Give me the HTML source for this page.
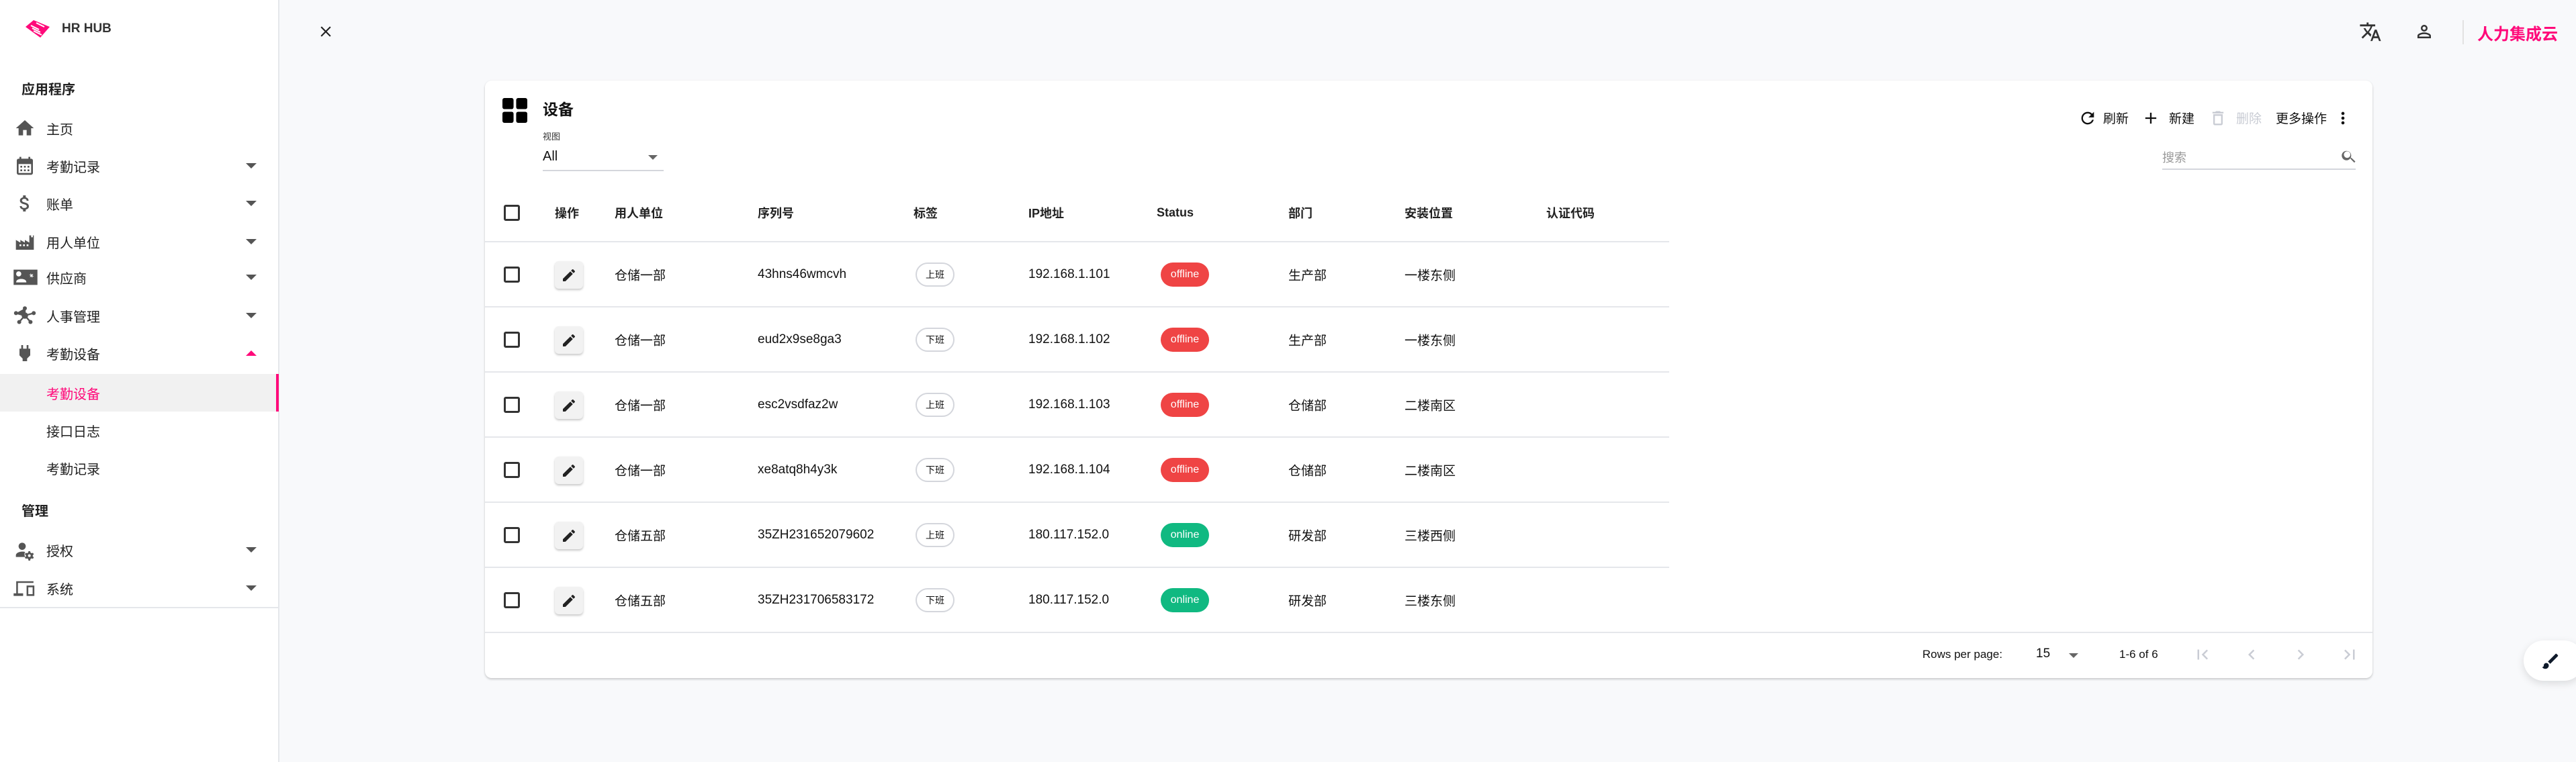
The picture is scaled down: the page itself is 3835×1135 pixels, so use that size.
<!DOCTYPE html>
<html><head><meta charset="utf-8">
<style>
*{box-sizing:border-box;margin:0;padding:0}
html,body{width:3835px;height:1135px;overflow:hidden;background:#f8f9fb;font-family:"Liberation Sans","Noto Sans CJK SC",sans-serif;color:#111}
.a{position:absolute}
#side{position:absolute;left:0;top:0;width:416px;height:1135px;background:#fff;border-right:2px solid #e5e7eb}
.mi{position:absolute;left:0;width:414px;height:56px;font-size:20px;color:#222;display:flex;align-items:center}
.mi .t{position:absolute;left:69px}
.mi svg.ic{position:absolute;left:21px;width:32px;height:32px;fill:#555}
.mi .ch{position:absolute;left:366px;width:0;height:0;border-left:8px solid transparent;border-right:8px solid transparent;border-top:8px solid #555}
.sec{position:absolute;left:32px;font-size:20px;font-weight:bold;color:#222}
#card{position:absolute;left:722px;top:120px;width:2810px;height:890px;background:#fff;border-radius:10px;box-shadow:0 2px 3px rgba(0,0,0,.18),0 0 2px rgba(0,0,0,.06)}
.row{position:absolute;left:0;width:1763px;height:97px;border-top:2px solid #e5e7eb;font-size:19px}
.c{position:absolute;top:50%;transform:translateY(-50%);white-space:nowrap}
.cb{position:absolute;left:28px;top:50%;margin-top:-12px;width:24px;height:24px;border:3px solid #333;border-radius:3px}
.eb{position:absolute;left:104px;top:50%;margin-top:-20px;width:42px;height:41px;background:#f2f2f2;border-radius:6px;box-shadow:0 2px 3px rgba(0,0,0,.22)}
.tag{position:absolute;left:641px;top:50%;margin-top:-18px;width:58px;height:36px;border:2px solid #d4d6dc;border-radius:18px;font-size:14px;display:flex;align-items:center;justify-content:center}
.st{position:absolute;left:1006px;top:50%;margin-top:-18px;width:72px;height:36px;border-radius:18px;color:#fff;font-size:16px;display:flex;align-items:center;justify-content:center}
.off{background:#ef4444}.on{background:#10b981}
.h{font-size:18px;font-weight:bold;color:#222}
</style></head><body>
<div id="side">
  <svg class="a" style="left:36px;top:28px" width="40" height="30" viewBox="0 0 40 30"><path d="M2 12 L14 2 L38 12 L24 28 Z" fill="#ff0a7a"/><path d="M10 10 L22 16 M12 14 L24 20 M14 18 L26 24 M18 6 L30 12" stroke="#fff" stroke-width="2" fill="none"/></svg>
  <div class="a" style="left:92px;top:32px;font-size:19px;font-weight:bold;color:#333">HR HUB</div>
  <div class="sec" style="top:117px">应用程序</div>
  <div class="mi" style="top:163px"><svg class="ic" viewBox="0 0 24 24"><path d="M10 20v-6h4v6h5v-8h3L12 3 2 12h3v8z"/></svg><span class="t">主页</span></div>
  <div class="mi" style="top:219px"><svg class="ic" viewBox="0 0 24 24"><path d="M19 4h-1V2h-2v2H8V2H6v2H5a2 2 0 0 0-2 2v14a2 2 0 0 0 2 2h14a2 2 0 0 0 2-2V6a2 2 0 0 0-2-2zm0 16H5V10h14zM7 12h2v2H7zm4 0h2v2h-2zm4 0h2v2h-2zm-8 4h2v2H7zm4 0h2v2h-2zm4 0h2v2h-2z"/></svg><span class="t">考勤记录</span><span class="ch"></span></div>
  <div class="mi" style="top:275px"><svg class="ic" viewBox="0 0 24 24"><path d="M11.8 10.9c-2.27-.59-3-1.2-3-2.15 0-1.09 1.01-1.850 2.7-1.85 1.78 0 2.440.85 2.5 2.1h2.21c-.07-1.72-1.12-3.3-3.21-3.81V3h-3v2.160c-1.94.42-3.5 1.68-3.5 3.61 0 2.31 1.91 3.46 4.7 4.13 2.5.6 3 1.48 3 2.41 0 .69-.49 1.79-2.7 1.79-2.06 0-2.87-.92-2.98-2.1h-2.2c.12 2.19 1.76 3.42 3.68 3.83V21h3v-2.15c1.95-.37 3.5-1.5 3.5-3.55 0-2.84-2.43-3.81-4.7-4.4z"/></svg><span class="t">账单</span><span class="ch"></span></div>
  <div class="mi" style="top:332px"><svg class="ic" viewBox="0 0 24 24"><path d="M2 21V10l5 3V10l5 3V10l5 3V5h2v2h2V5h1v16zm4-4h2v-2H6zm4 0h2v-2h-2zm4 0h2v-2h-2z"/></svg><span class="t">用人单位</span><span class="ch"></span></div>
  <div class="mi" style="top:385px"><svg class="ic" style="width:38px;left:19px" viewBox="0 0 30 24"><path d="M1 3h28v18H1zm9 5a3 3 0 1 0 0 .01zM4 18h12c0-3-3-4-6-4s-6 1-6 4zm17-11l1 2 2-1-1 2 2 1-2 0 0 2-1-2-2 1 1-2-2-1h2z" fill-rule="evenodd"/></svg><span class="t">供应商</span><span class="ch"></span></div>
  <div class="mi" style="top:442px"><svg class="ic" style="width:36px;left:19px" viewBox="0 0 30 24"><circle cx="15" cy="12" r="4"/><circle cx="15" cy="3" r="2.5"/><circle cx="4" cy="9" r="2.5"/><circle cx="26" cy="9" r="2.5"/><circle cx="8" cy="20" r="2.5"/><circle cx="22" cy="20" r="2.5"/><path d="M15 3L15 12L4 9M15 12L26 9M15 12L8 20M15 12L22 20" stroke="#555" stroke-width="2"/></svg><span class="t">人事管理</span><span class="ch"></span></div>
  <div class="mi" style="top:498px"><svg class="ic" viewBox="0 0 24 24"><path d="M16 7V3h-2v4h-4V3H8v4H6v7.5L9.5 18v3h5v-3l3.5-3.5V7z"/></svg><span class="t">考勤设备</span><span class="ch" style="border-top:none;border-bottom:8px solid #ff0a7a"></span></div>
  <div class="mi" style="top:557px;background:#f1f1f1"><span class="t" style="color:#ff0a7a">考勤设备</span><span class="a" style="left:411px;top:0;width:4px;height:56px;background:#ff0a7a"></span></div>
  <div class="mi" style="top:613px"><span class="t">接口日志</span></div>
  <div class="mi" style="top:669px"><span class="t">考勤记录</span></div>
  <div class="sec" style="top:745px">管理</div>
  <div class="mi" style="top:791px"><svg class="ic" viewBox="0 0 24 24"><circle cx="9" cy="8" r="4"/><path d="M9 14c-4 0-7 2-7 4v2h10.5a6 6 0 0 1-.3-5.7C10.5 14 9.7 14 9 14zm11.8 4l1.2-1-1-1.7-1.5.5a3 3 0 0 0-1.3-.8L18 13.5h-2l-.2 1.5a3 3 0 0 0-1.3.8L13 15.3l-1 1.7 1.2 1a3 3 0 0 0 0 1.4L12 20.3l1 1.7 1.5-.5c.4.4.8.6 1.3.8l.2 1.7h2l.2-1.7c.5-.2.9-.4 1.3-.8l1.5.5 1-1.7-1.2-1a3 3 0 0 0 0-1.3zM17 20a1.5 1.5 0 1 1 0-3 1.5 1.5 0 0 1 0 3z"/></svg><span class="t">授权</span><span class="ch"></span></div>
  <div class="mi" style="top:848px"><svg class="ic" style="width:36px;left:19px" viewBox="0 0 28 24"><path d="M4 4h20v2H6v12h6v3H1v-3h3zm12 5h9v12h-9zm2 2v8h5v-8z"/></svg><span class="t">系统</span><span class="ch"></span></div>
  <div class="a" style="left:0;top:904px;width:414px;height:2px;background:#e5e7eb"></div>
</div>

<svg class="a" style="left:472px;top:34px" width="26" height="26" viewBox="0 0 24 24"><path d="M19 6.4L17.6 5 12 10.6 6.4 5 5 6.4 10.6 12 5 17.6 6.4 19 12 13.4 17.6 19 19 17.6 13.4 12z" fill="#222"/></svg>
<svg class="a" style="left:3512px;top:30px" width="34" height="34" viewBox="0 0 24 24"><path d="M12.9 15.1l-2.5-2.5v0A17 17 0 0 0 14 6.5h3V4.5h-7V2.5H8v2H1v2h11.2A15.8 15.8 0 0 1 9 11.9 15.6 15.6 0 0 1 6.7 8.5h-2a17.6 17.6 0 0 0 3 4.5L2.6 18 4 19.4l5-5 3.1 3.1zM18.5 10h-2L12 22h2l1.1-3h4.8l1.1 3h2zm-2.6 7l1.6-4.3 1.6 4.3z" fill="#333"/></svg>
<svg class="a" style="left:3594px;top:32px" width="30" height="30" viewBox="0 0 24 24"><path d="M12 6a2 2 0 1 1 0 4 2 2 0 0 1 0-4m0 9c2.7 0 5.8 1.3 6 2v1H6v-1c.2-.7 3.3-2 6-2m0-11a4 4 0 1 0 0 8 4 4 0 0 0 0-8zm0 9c-2.7 0-8 1.3-8 4v3h16v-3c0-2.7-5.3-4-8-4z" fill="#333"/></svg>
<div class="a" style="left:3666px;top:30px;width:2px;height:36px;background:#e2e2e2"></div>
<div class="a" style="left:3688px;top:31px;font-size:24px;font-weight:bold;color:#ff0a7a">人力集成云</div>

<div id="card">
  <svg class="a" style="left:26px;top:26px" width="37" height="37" viewBox="0 0 38 38"><rect x="0" y="0" width="17" height="17" rx="3"/><rect x="21" y="0" width="17" height="17" rx="3"/><rect x="0" y="21" width="17" height="17" rx="3"/><rect x="21" y="21" width="17" height="17" rx="3"/></svg>
  <div class="a" style="left:86px;top:24px;font-size:23px;font-weight:bold;color:#111">设备</div>
  <div class="a" style="left:86px;top:73px;font-size:13px;color:#333">视图</div>
  <div class="a" style="left:86px;top:102px;font-size:20px;color:#111">All</div>
  <div class="a" style="left:243px;top:111px;border-left:7px solid transparent;border-right:7px solid transparent;border-top:7px solid #666"></div>
  <div class="a" style="left:86px;top:133px;width:180px;height:2px;background:#d4d6dc"></div>

  <svg class="a" style="left:2372px;top:42px" width="28" height="28" viewBox="0 0 24 24"><path d="M17.65 6.35A7.96 7.96 0 0 0 12 4a8 8 0 1 0 7.73 10h-2.08A6 6 0 1 1 12 6c1.66 0 3.14.69 4.22 1.78L13 11h7V4z" fill="#111"/></svg>
  <div class="a" style="left:2409px;top:42px;font-size:19px">刷新</div>
  <svg class="a" style="left:2466px;top:42px" width="28" height="28" viewBox="0 0 24 24"><path d="M19 13h-6v6h-2v-6H5v-2h6V5h2v6h6z" fill="#111"/></svg>
  <div class="a" style="left:2507px;top:42px;font-size:19px">新建</div>
  <svg class="a" style="left:2566px;top:42px" width="28" height="28" viewBox="0 0 24 24"><path d="M6 19a2 2 0 0 0 2 2h8a2 2 0 0 0 2-2V7H6zM8 9h8v10H8zm7.5-5l-1-1h-5l-1 1H5v2h14V4z" fill="#c9ccd4"/></svg>
  <div class="a" style="left:2607px;top:42px;font-size:19px;color:#c9ccd4">删除</div>
  <div class="a" style="left:2666px;top:42px;font-size:19px">更多操作</div>
  <svg class="a" style="left:2752px;top:42px" width="28" height="28" viewBox="0 0 24 24"><path d="M12 8a2 2 0 1 0 0-4 2 2 0 0 0 0 4zm0 2a2 2 0 1 0 0 4 2 2 0 0 0 0-4zm0 6a2 2 0 1 0 0 4 2 2 0 0 0 0-4z" fill="#111"/></svg>
  <div class="a" style="left:2497px;top:101px;font-size:18px;color:#999">搜索</div>
  <svg class="a" style="left:2762px;top:100px" width="26" height="26" viewBox="0 0 24 24"><path d="M15.5 14h-.8l-.3-.3A6.5 6.5 0 1 0 14 14.4l.3.3v.8l5 5 1.5-1.5zm-6 0a4.5 4.5 0 1 1 0-9 4.5 4.5 0 0 1 0 9z" fill="#666"/></svg>
  <div class="a" style="left:2497px;top:131px;width:288px;height:2px;background:#d4d6dc"></div>

  <div class="row" style="top:154px;height:86px;border-top:none">
    <div class="cb"></div>
    <div class="c h" style="left:104px">操作</div>
    <div class="c h" style="left:193px">用人单位</div>
    <div class="c h" style="left:406px">序列号</div>
    <div class="c h" style="left:638px">标签</div>
    <div class="c h" style="left:809px">IP地址</div>
    <div class="c h" style="left:1000px">Status</div>
    <div class="c h" style="left:1196px">部门</div>
    <div class="c h" style="left:1369px">安装位置</div>
    <div class="c h" style="left:1580px">认证代码</div>
  </div>

  <div class="row" style="top:239px"><div class="cb"></div><div class="eb"><svg class="a" style="left:9px;top:9px" width="24" height="24" viewBox="0 0 24 24"><path d="M3 17.25V21h3.75L17.81 9.94l-3.75-3.75zM20.71 7.04a1 1 0 0 0 0-1.41l-2.34-2.34a1 1 0 0 0-1.410 0l-1.83 1.83 3.75 3.75z" fill="#222"/></svg></div><div class="c" style="left:193px">仓储一部</div><div class="c" style="left:406px">43hns46wmcvh</div><div class="tag">上班</div><div class="c" style="left:809px">192.168.1.101</div><div class="st off">offline</div><div class="c" style="left:1196px">生产部</div><div class="c" style="left:1369px">一楼东侧</div></div>
  <div class="row" style="top:336px"><div class="cb"></div><div class="eb"><svg class="a" style="left:9px;top:9px" width="24" height="24" viewBox="0 0 24 24"><path d="M3 17.25V21h3.75L17.81 9.94l-3.75-3.75zM20.71 7.04a1 1 0 0 0 0-1.41l-2.34-2.34a1 1 0 0 0-1.41 0l-1.83 1.83 3.75 3.75z" fill="#222"/></svg></div><div class="c" style="left:193px">仓储一部</div><div class="c" style="left:406px">eud2x9se8ga3</div><div class="tag">下班</div><div class="c" style="left:809px">192.168.1.102</div><div class="st off">offline</div><div class="c" style="left:1196px">生产部</div><div class="c" style="left:1369px">一楼东侧</div></div>
  <div class="row" style="top:433px"><div class="cb"></div><div class="eb"><svg class="a" style="left:9px;top:9px" width="24" height="24" viewBox="0 0 24 24"><path d="M3 17.25V21h3.75L17.81 9.94l-3.75-3.75zM20.71 7.04a1 1 0 0 0 0-1.41l-2.34-2.34a1 1 0 0 0-1.41 0l-1.83 1.83 3.75 3.75z" fill="#222"/></svg></div><div class="c" style="left:193px">仓储一部</div><div class="c" style="left:406px">esc2vsdfaz2w</div><div class="tag">上班</div><div class="c" style="left:809px">192.168.1.103</div><div class="st off">offline</div><div class="c" style="left:1196px">仓储部</div><div class="c" style="left:1369px">二楼南区</div></div>
  <div class="row" style="top:530px"><div class="cb"></div><div class="eb"><svg class="a" style="left:9px;top:9px" width="24" height="24" viewBox="0 0 24 24"><path d="M3 17.25V21h3.75L17.81 9.94l-3.75-3.75zM20.71 7.04a1 1 0 0 0 0-1.41l-2.34-2.34a1 1 0 0 0-1.41 0l-1.83 1.83 3.75 3.75z" fill="#222"/></svg></div><div class="c" style="left:193px">仓储一部</div><div class="c" style="left:406px">xe8atq8h4y3k</div><div class="tag">下班</div><div class="c" style="left:809px">192.168.1.104</div><div class="st off">offline</div><div class="c" style="left:1196px">仓储部</div><div class="c" style="left:1369px">二楼南区</div></div>
  <div class="row" style="top:627px"><div class="cb"></div><div class="eb"><svg class="a" style="left:9px;top:9px" width="24" height="24" viewBox="0 0 24 24"><path d="M3 17.25V21h3.75L17.81 9.94l-3.75-3.75zM20.71 7.04a1 1 0 0 0 0-1.41l-2.34-2.34a1 1 0 0 0-1.41 0l-1.83 1.83 3.75 3.75z" fill="#222"/></svg></div><div class="c" style="left:193px">仓储五部</div><div class="c" style="left:406px">35ZH231652079602</div><div class="tag">上班</div><div class="c" style="left:809px">180.117.152.0</div><div class="st on">online</div><div class="c" style="left:1196px">研发部</div><div class="c" style="left:1369px">三楼西侧</div></div>
  <div class="row" style="top:724px"><div class="cb"></div><div class="eb"><svg class="a" style="left:9px;top:9px" width="24" height="24" viewBox="0 0 24 24"><path d="M3 17.25V21h3.75L17.81 9.94l-3.75-3.75zM20.71 7.04a1 1 0 0 0 0-1.41l-2.34-2.34a1 1 0 0 0-1.41 0l-1.83 1.83 3.75 3.75z" fill="#222"/></svg></div><div class="c" style="left:193px">仓储五部</div><div class="c" style="left:406px">35ZH231706583172</div><div class="tag">下班</div><div class="c" style="left:809px">180.117.152.0</div><div class="st on">online</div><div class="c" style="left:1196px">研发部</div><div class="c" style="left:1369px">三楼东侧</div></div>

  <div class="a" style="left:0;top:821px;width:2810px;height:2px;background:#e5e7eb"></div>
  <div class="a" style="left:2140px;top:845px;font-size:17px">Rows per page:</div>
  <div class="a" style="left:2309px;top:843px;font-size:19px">15</div>
  <div class="a" style="left:2358px;top:853px;border-left:7px solid transparent;border-right:7px solid transparent;border-top:7px solid #666"></div>
  <div class="a" style="left:2433px;top:845px;font-size:17px">1-6 of 6</div>
  <svg class="a" style="left:2542px;top:840px" width="30" height="30" viewBox="0 0 24 24"><path d="M18.4 16.6L13.8 12l4.6-4.6L17 6l-6 6 6 6zM6 6h2v12H6z" fill="#c9ccd4"/></svg>
  <svg class="a" style="left:2615px;top:840px" width="30" height="30" viewBox="0 0 24 24"><path d="M15.4 7.4L14 6l-6 6 6 6 1.4-1.4L10.8 12z" fill="#c9ccd4"/></svg>
  <svg class="a" style="left:2688px;top:840px" width="30" height="30" viewBox="0 0 24 24"><path d="M10 6L8.6 7.4 13.2 12l-4.6 4.6L10 18l6-6z" fill="#c9ccd4"/></svg>
  <svg class="a" style="left:2761px;top:840px" width="30" height="30" viewBox="0 0 24 24"><path d="M5.6 7.4L10.2 12l-4.6 4.6L7 18l6-6-6-6zM16 6h2v12h-2z" fill="#c9ccd4"/></svg>
</div>

<div class="a" style="left:3757px;top:954px;width:90px;height:60px;background:#fff;border-radius:30px;box-shadow:0 4px 12px rgba(0,0,0,.12)"></div>
<svg class="a" style="left:3782px;top:970px" width="30" height="30" viewBox="0 0 24 24"><path d="M7 14c-1.66 0-3 1.34-3 3 0 1.31-1.16 2-2 2 .92 1.22 2.49 2 4 2 2.21 0 4-1.79 4-4 0-1.66-1.34-3-3-3zm13.71-9.37l-1.34-1.34a1 1 0 0 0-1.41 0L9 12.250 11.75 15l8.96-8.96a1 1 0 0 0 0-1.41z" fill="#0f1a2a"/></svg>
</body></html>
